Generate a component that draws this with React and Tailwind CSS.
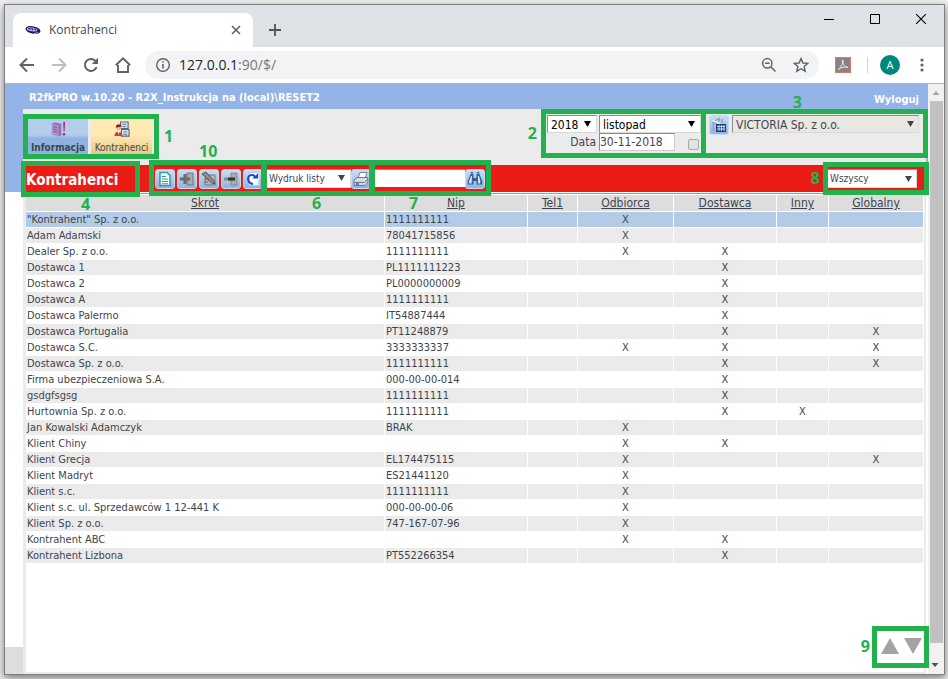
import React from "react";

const COLUMNS = ["Skrót", "Nip", "Tel1", "Odbiorca", "Dostawca", "Inny", "Globalny"];

// name, tax id, then the flags: o = Odbiorca, d = Dostawca, i = Inny, g = Globalny
const ROWS = [
  ['"Kontrahent" Sp. z o.o.', "1111111111", "o"],
  ["Adam Adamski", "78041715856", "o"],
  ["Dealer Sp. z o.o.", "1111111111", "od"],
  ["Dostawca 1", "PL1111111223", "d"],
  ["Dostawca 2", "PL0000000009", "d"],
  ["Dostawca A", "1111111111", "d"],
  ["Dostawca Palermo", "IT54887444", "d"],
  ["Dostawca Portugalia", "PT11248879", "dg"],
  ["Dostawca S.C.", "3333333337", "odg"],
  ["Dostawca Sp. z o.o.", "1111111111", "dg"],
  ["Firma ubezpieczeniowa S.A.", "000-00-00-014", "d"],
  ["gsdgfsgsg", "1111111111", "d"],
  ["Hurtownia Sp. z o.o.", "1111111111", "di"],
  ["Jan Kowalski Adamczyk", "BRAK", "o"],
  ["Klient Chiny", "", "od"],
  ["Klient Grecja", "EL174475115", "og"],
  ["Klient Madryt", "ES21441120", "o"],
  ["Klient s.c.", "1111111111", "o"],
  ["Klient s.c. ul. Sprzedawców 1 12-441 K", "000-00-00-06", "o"],
  ["Klient Sp. z o.o.", "747-167-07-96", "o"],
  ["Kontrahent ABC", "", "od"],
  ["Kontrahent Lizbona", "PT552266354", "d"],
];

function Dropdown({ label, value, className, arrow = "right-[5px]" }) {
  return (
    <span className={`relative flex shrink-0 ${className}`}>
      <select
        aria-label={label}
        defaultValue={value}
        className="h-full w-full appearance-none border border-[#d8d8d8] border-t-[#8c8c8c] border-l-[#8c8c8c] bg-inherit pt-px pl-[3px] leading-none outline-none"
      >
        <option>{value}</option>
      </select>
      <svg viewBox="0 0 7 6" className={`pointer-events-none absolute top-1/2 h-[6px] w-[7px] -translate-y-1/2 ${arrow}`}>
        <path d="M0 0H7L3.5 6Z" fill="currentColor" />
      </svg>
    </span>
  );
}

function ToolButton({ label, children }) {
  return (
    <button
      type="button"
      aria-label={label}
      className="flex h-5 w-5 shrink-0 items-center justify-center rounded-[3px] border border-[#c3dbf3] bg-linear-to-b from-[#c9def5] to-[#8fb4e0]"
    >
      {children}
    </button>
  );
}

function Browser() {
  return (
    <>
      <div className="flex h-[42px] bg-[#dee1e6] pl-2">
        <div className="mt-2 flex w-60 items-center rounded-t-lg bg-white pr-3 pl-3">
          <svg viewBox="0 0 16 10" className="h-[10px] w-4">
            <ellipse cx="8" cy="5" rx="7.6" ry="3.7" transform="rotate(12 8 5)" fill="#17176e" />
            <ellipse cx="7.2" cy="4.3" rx="5.4" ry="1.9" transform="rotate(10 7 4)" fill="#b9bbdc" />
            <path d="M3 3.4h2v1.6m1-1.3h1.6v1.7m1.2-1.3h1.6v1.4" stroke="#17176e" strokeWidth=".9" fill="none" />
            <path d="M9 8.6l4-.9" stroke="#fff" strokeWidth=".7" />
          </svg>
          <span className="ml-2 flex-1 text-xs text-[#45494d]">Kontrahenci</span>
          <button type="button" aria-label="Zamknij kartę">
            <svg viewBox="0 0 10 10" className="h-[10px] w-[10px]">
              <path d="M1 1L9 9M9 1L1 9" stroke="#5f6368" strokeWidth="1.6" />
            </svg>
          </button>
        </div>
        <button type="button" aria-label="Nowa karta" className="mt-2 ml-4">
          <svg viewBox="0 0 12 12" className="h-3 w-3">
            <path d="M6 0V12M0 6H12" stroke="#505459" strokeWidth="1.8" />
          </svg>
        </button>
        <div className="mt-[9px] ml-auto flex h-[10px] gap-9 pr-[18px]">
          <button type="button" aria-label="Minimalizuj">
            <svg viewBox="0 0 10 10" className="h-[10px] w-[10px]"><path d="M0 5.5H10" stroke="#000" /></svg>
          </button>
          <button type="button" aria-label="Maksymalizuj">
            <svg viewBox="0 0 10 10" className="h-[10px] w-[10px]"><path d="M.5 .5H9.5V9.5H.5Z" fill="none" stroke="#000" /></svg>
          </button>
          <button type="button" aria-label="Zamknij">
            <svg viewBox="0 0 10 10" className="h-[10px] w-[10px]"><path d="M0 0L10 10M10 0L0 10" stroke="#000" strokeWidth="1.1" /></svg>
          </button>
        </div>
      </div>
      <div className="flex h-[37px] items-center border-b border-[#b5b5b5] bg-white pl-[14px] pr-5 text-[#5f6368]">
        <div className="flex items-center gap-4">
          <button type="button" aria-label="Wstecz">
            <svg viewBox="0 0 16 16" className="h-4 w-4"><path d="M15 8H2M8 1.5L1.5 8L8 14.5" fill="none" stroke="currentColor" strokeWidth="1.9" /></svg>
          </button>
          <button type="button" aria-label="Dalej">
            <svg viewBox="0 0 16 16" className="h-4 w-4"><path d="M1 8H14M8 1.5L14.5 8L8 14.5" fill="none" stroke="#bcbec1" strokeWidth="1.9" /></svg>
          </button>
          <button type="button" aria-label="Odśwież">
            <svg viewBox="0 0 16 16" className="h-4 w-4">
              <path d="M13.6 10A6 6 0 1 1 12.4 3.9L14 5.6" fill="none" stroke="currentColor" strokeWidth="2" />
              <path d="M15 .8V7H8.8Z" fill="currentColor" />
            </svg>
          </button>
          <button type="button" aria-label="Strona główna">
            <svg viewBox="0 0 16 16" className="h-4 w-4"><path d="M3 8V15H6.5M13 8V15H3M.8 8.2L8 1.3L15.2 8.2" fill="none" stroke="currentColor" strokeWidth="1.9" /></svg>
          </button>
        </div>
        <div className="ml-[14px] flex h-7 flex-1 items-center rounded-full bg-[#f1f3f4] pr-[10px] pl-[10px]">
          <svg viewBox="0 0 16 16" className="h-4 w-4">
            <circle cx="8" cy="8" r="6.3" fill="none" stroke="currentColor" strokeWidth="1.4" />
            <path d="M8 7V11.6M8 4.2V5.8" stroke="currentColor" strokeWidth="1.6" />
          </svg>
          <span className="ml-2 flex-1 text-sm text-[#75787c]"><span className="text-[#25282b]">127.0.0.1</span>:90/$/</span>
          <svg viewBox="0 0 16 16" className="h-4 w-4">
            <circle cx="6.3" cy="6.3" r="4.7" fill="none" stroke="currentColor" strokeWidth="1.5" />
            <path d="M4 6.3H8.6M9.8 9.8L14.5 14.5" stroke="currentColor" strokeWidth="1.5" />
          </svg>
          <svg viewBox="0 0 16 16" className="ml-4 h-4 w-4">
            <path d="M8 1.6L9.9 6L14.7 6.4L11.1 9.5L12.2 14.2L8 11.7L3.8 14.2L4.9 9.5L1.3 6.4L6.1 6Z" fill="none" stroke="currentColor" strokeWidth="1.4" />
          </svg>
        </div>
        <svg viewBox="0 0 16 16" className="ml-4 h-4 w-4">
          <rect x=".5" y=".5" width="15" height="15" fill="#8b8280" stroke="#e0796d" />
          <path d="M7.2 3C9 2.6 8.2 7 3.4 13C2.6 12 9 9 13 10.3C11 11.4 7.2 7 7.2 3Z" fill="none" stroke="#eee" />
        </svg>
        <span className="ml-4 h-4 w-px bg-[#cfd1d4]" />
        <span className="ml-3 flex h-5 w-5 items-center justify-center rounded-full bg-[#00897b] text-[11px] text-white">A</span>
        <button type="button" aria-label="Menu" className="ml-5">
          <svg viewBox="0 0 4 14" className="h-[14px] w-1" fill="currentColor">
            <circle cx="2" cy="2" r="1.6" /><circle cx="2" cy="7" r="1.6" /><circle cx="2" cy="12" r="1.6" />
          </svg>
        </button>
      </div>
    </>
  );
}

function TopPanel() {
  return (
    <div className="flex h-14 items-start bg-[#ebebeb] pt-[6px] pr-[7px] pl-[5px] text-[#3f4650]">
      <div className="mt-1 flex gap-[3px] text-[10px] leading-3">
        <button type="button" className="flex h-[35px] w-[60px] flex-col items-center justify-between bg-linear-to-b from-[#b3cdeb] from-45% to-[#8fb3e0] to-55% pt-[2px] font-bold">
          <svg viewBox="0 0 18 18" className="h-[17px] w-[17px]">
            <path d="M2 3L5 1.5L12 3V15L9 16.5L2 14Z" fill="#9270b8" />
            <path d="M2 3L9 4.5V16.5L2 14Z" fill="#b28ccd" />
            <path d="M3.5 6L7.6 7M3.5 8.5L7.6 9.5M3.5 11L7.6 12" stroke="#79569f" />
            <path d="M14 1H16L15.4 11H14.4Z" fill="#ad2867" />
            <circle cx="14.8" cy="14" r="1.4" fill="#ad2867" />
          </svg>
          Informacja
        </button>
        <button type="button" className="flex h-[35px] w-[61px] flex-col items-center justify-between bg-linear-to-b from-[#ffeab4] from-45% to-[#e9c982] to-100% pt-[2px]">
          <svg viewBox="0 0 18 18" className="h-[17px] w-[17px]">
            <path d="M8 1H16V8H8ZM9 9H17V16H9Z" fill="#dfe8f2" stroke="#55677d" strokeWidth="1.2" />
            <path d="M10 3.5H14M10 6H14M11 11.5H15M11 14H15" stroke="#55677d" />
            <circle cx="6" cy="7" r="2.8" fill="#f3b58b" />
            <path d="M3 7C2 3 9 2 9 6Z" fill="#7a2b20" />
            <path d="M1.5 16C1.5 9.5 10 9.5 10 16Z" fill="#d13b4d" />
            <path d="M4.8 10.5L6 14L7.2 10.5Z" fill="#fff" />
          </svg>
          Kontrahenci
        </button>
      </div>
      <div className="ml-auto w-[154px] text-xs">
        <div className="flex gap-[2px] text-black">
          <Dropdown label="Rok" value="2018" className="h-[18px] w-[50px] bg-white" arrow="right-[6px]" />
          <Dropdown label="Miesiąc" value="listopad" className="h-[18px] w-[102px] bg-white" arrow="right-[6px]" />
        </div>
        <div className="flex items-center">
          <label htmlFor="data" className="w-[52px] pr-[3px] text-right">Data</label>
          <input id="data" defaultValue="30-11-2018" className="h-[18px] w-[76px] border border-[#ccc] border-t-[#8c8c8c] border-l-[#8c8c8c] bg-white" />
          <input type="checkbox" aria-label="Blokada daty" className="mt-1 ml-[13px] h-[11px] w-[11px] appearance-none rounded-[2px] border border-[#a8a8a8] bg-[#e3e3e3]" />
        </div>
      </div>
      <div className="ml-2 flex gap-[3px] text-xs">
        <ToolButton label="Firma">
          <svg viewBox="0 0 16 16" className="h-4 w-4">
            <path d="M1 6L8 1.5V6M2.5 14V6H6M11 2V6" fill="none" stroke="#8ba0bb" strokeWidth="1.4" />
            <path d="M1.5 3.5L9 6.5" stroke="#e8f1fb" strokeWidth="1.5" />
            <rect x="5" y="7" width="10" height="8" fill="#1d3f86" />
            <path d="M6 9.5H14M6 12H14M8 8V14M10.5 8V14M13 8V14" stroke="#d7e5f8" strokeWidth=".9" />
          </svg>
        </ToolButton>
        <Dropdown label="Firma" value="VICTORIA Sp. z o.o." className="h-[18px] w-[187px] bg-[#e8e8e1]" arrow="right-[5px]" />
      </div>
    </div>
  );
}

function RedBar() {
  return (
    <div className="flex h-[27px] items-center bg-[#eb1c16] pr-[7px] text-[10px] text-[#3f4650]">
      <h1 className="w-[129px] shrink-0 pt-[3px] text-[15px] leading-none font-bold text-white">Kontrahenci</h1>
      <div className="flex gap-[2px]">
        <ToolButton label="Nowy">
          <svg viewBox="0 0 16 16" className="h-4 w-4">
            <path d="M3 1.5H10L13 4.5V14.5H3Z" fill="#fff" stroke="#2a9aab" strokeWidth="1.5" />
            <path d="M5 5.5H9M5 8H11M5 10.5H11M5 12.7H11" stroke="#2a9aab" strokeWidth="1.1" />
          </svg>
        </ToolButton>
        <ToolButton label="Dodaj">
          <svg viewBox="0 0 16 16" className="h-4 w-4">
            <path d="M8 2H14V14H8Z" fill="#aaa" stroke="#777" />
            <path d="M6 3V13M1 8H11" stroke="#6b6b6b" strokeWidth="3" />
          </svg>
        </ToolButton>
        <ToolButton label="Edytuj">
          <svg viewBox="0 0 16 16" className="h-4 w-4">
            <path d="M6 4H14V14H4V9Z" fill="#b9b9b9" stroke="#777" />
            <path d="M1 3L5 1L13 10L14 13L10.5 12Z" fill="#8e8e8e" stroke="#555" />
            <path d="M3 8H8M3 11H7" stroke="#666" />
          </svg>
        </ToolButton>
        <ToolButton label="Usuń">
          <svg viewBox="0 0 16 16" className="h-4 w-4">
            <path d="M8 2H14V14H8Z" fill="#aaa" stroke="#888" />
            <path d="M1 8H6" stroke="#888" strokeWidth="3" />
            <path d="M5 8H12" stroke="#333" strokeWidth="3" />
          </svg>
        </ToolButton>
        <ToolButton label="Odśwież listę">
          <svg viewBox="0 0 16 16" className="h-4 w-4">
            <path d="M4 1.5H11L14 4.5V14.5H4Z" fill="#fff" stroke="#b6c5dc" />
            <path d="M8 13C2 12 1.5 4.5 6.5 4C8.5 3.8 10 5 10.5 7" fill="none" stroke="#1449d8" strokeWidth="2" />
            <path d="M7.3 7.6H13V2.5Z" fill="#1449d8" />
          </svg>
        </ToolButton>
      </div>
      <div className="ml-[2px] flex">
        <Dropdown label="Wydruk" value="Wydruk listy" className="h-[19px] w-[86px] bg-white" arrow="right-[6px]" />
        <ToolButton label="Drukuj">
          <svg viewBox="0 0 16 16" className="h-4 w-4">
            <path d="M5 7L7 1.5H14L12 7Z" fill="#fff" stroke="#76859a" />
            <path d="M1 9L4 6.5H14.5L15 11L12 14.5H1.5Z" fill="#d4dae3" stroke="#6b7889" />
            <path d="M2 11.5H11.5L14.5 8.5" fill="none" stroke="#6b7889" />
            <path d="M3 13H6" stroke="#3559c5" strokeWidth="1.5" />
          </svg>
        </ToolButton>
      </div>
      <div className="ml-[3px] flex">
        <input aria-label="Szukaj" className="h-[18px] w-[91px] border-t border-[#8c8c8c] bg-white" />
        <ToolButton label="Znajdź">
          <svg viewBox="0 0 16 16" className="h-4 w-4">
            <path d="M3.5 3H6.5V7H9.5V3H12.5L15.2 10V13.5H9.5V10H6.5V13.5H.8V10Z" fill="#3b5f9c" />
            <path d="M4 5L2.2 10V12.5H4.6L5 5ZM11 5L11 12.5H13L13.4 10.5L12 5Z" fill="#dce8f7" />
            <path d="M3.7 1.8H6.2M9.8 1.8H12.3" stroke="#3b5f9c" strokeWidth="1.6" />
          </svg>
        </ToolButton>
      </div>
      <Dropdown label="Rodzaj" value="Wszyscy" className="ml-auto h-[19px] w-[91px] bg-white" arrow="right-[5px]" />
    </div>
  );
}

function Contractors() {
  return (
    <table className="w-full table-fixed border-separate border-spacing-0 text-[11px] text-[#3d444c]">
      <colgroup>
        <col />
        <col className="w-[143px]" />
        <col className="w-[50px]" />
        <col className="w-[96px]" />
        <col className="w-[103px]" />
        <col className="w-[52px]" />
        <col className="w-[95px]" />
      </colgroup>
      <thead>
        <tr className="bg-[#ddd]">
          {COLUMNS.map((name) => (
            <th key={name} className="h-[17px] border-r border-b border-white p-0 pt-px text-xs leading-[15px] font-normal">
              <a href="#" className="underline">{name}</a>
            </th>
          ))}
        </tr>
      </thead>
      <tbody>
        {ROWS.map(([name, nip, flags], i) => (
          <tr key={name} className={i === 0 ? "bg-[#b4cbe7]" : i % 2 ? "bg-[#ebebeb]" : "bg-white"}>
            <td className="h-4 border-r border-b border-white p-0 pt-px pl-px leading-[14px] whitespace-nowrap">{name}</td>
            <td className="border-r border-b border-white p-0 pt-px pl-px leading-[14px]">{nip}</td>
            <td className="border-r border-b border-white p-0" />
            {["o", "d", "i", "g"].map((flag) => (
              <td key={flag} className="border-r border-b border-white p-0 pt-px text-center leading-[14px]">
                {flags.includes(flag) ? "X" : ""}
              </td>
            ))}
          </tr>
        ))}
      </tbody>
    </table>
  );
}

const FRAME = "pointer-events-none absolute border-[5px] border-[#22b14c]";
const NUMBER = "pointer-events-none absolute text-base leading-4 font-bold text-[#22b14c]";

// Numbered call-outs laid over the page, measured from the corners of the window.
function Callouts() {
  return (
    <div className="pointer-events-none absolute inset-0 font-['Open_Sans',sans-serif]">
      <div className={`${FRAME} top-[109px] left-[18px] h-[45px] w-[136px]`} />
      <span className={`${NUMBER} top-[123px] left-[159px]`}>1</span>
      <div className={`${FRAME} top-[104px] right-[238px] h-[49px] w-[165px]`} />
      <span className={`${NUMBER} top-[120px] right-[407px]`}>2</span>
      <div className={`${FRAME} top-[104px] right-[16px] h-[49px] w-[227px]`} />
      <span className={`${NUMBER} top-[89px] right-[142px]`}>3</span>
      <div className={`${FRAME} top-[156px] left-[16px] h-[36px] w-[119px]`} />
      <span className={`${NUMBER} top-[191px] left-[76px]`}>4</span>
      <div className={`${FRAME} top-[155px] left-[144px] h-[36px] w-[117px]`} />
      <span className={`${NUMBER} top-[138px] left-[194px]`}>10</span>
      <div className={`${FRAME} top-[155px] left-[257px] h-[36px] w-[112px]`} />
      <span className={`${NUMBER} top-[190px] left-[307px]`}>6</span>
      <div className={`${FRAME} top-[155px] left-[365px] h-[36px] w-[121px]`} />
      <span className={`${NUMBER} top-[190px] left-[404px]`}>7</span>
      <div className={`${FRAME} top-[157px] right-[15px] h-[33px] w-[106px]`} />
      <span className={`${NUMBER} top-[165px] right-[124px]`}>8</span>
      <div className={`${FRAME} right-[15px] bottom-[6px] h-[42px] w-[57px]`} />
      <span className={`${NUMBER} right-[74px] bottom-[20px]`}>9</span>
    </div>
  );
}

export default function App() {
  return (
    <div className="flex min-h-screen bg-[#efefef] py-1 pr-[3px] pl-1">
      <div className="relative flex flex-1 flex-col border border-[#808080] bg-white font-['Open_Sans',sans-serif] shadow-[0_3px_8px_rgba(0,0,0,0.5)]">
        <Browser />
        <div className="flex flex-1 font-['DejaVu_Sans_Condensed','DejaVu_Sans',sans-serif]">
          <main className="flex flex-1 flex-col">
            <header className="flex h-[25px] items-center justify-between bg-[#94b3e6] pt-[3px] pr-[9px] pl-6 text-[11px] font-bold text-white">
              <span>R2fkPRO w.10.20 - R2X_Instrukcja na (local)\RESET2</span>
              <a href="#" className="pt-1">Wyloguj</a>
            </header>
            <div className="flex flex-1">
              <div className="flex w-[18px] flex-col">
                <div className="h-[83px] bg-[#94b3e6]" />
                <div className="mt-auto h-[27px] bg-[#ddd]" />
              </div>
              <div className="flex flex-1 flex-col">
                <TopPanel />
                <div className="flex flex-1 flex-col border-r-2 border-b-2 border-l-[3px] border-[#ebebeb]">
                  <RedBar />
                  <div className="mt-px mb-px h-px bg-[#999]" />
                  <Contractors />
                  <div className="mt-auto flex justify-end gap-[5px] pr-[2px] pb-[18px]">
                    <button type="button" aria-label="Poprzednia strona">
                      <svg viewBox="0 0 18 16" className="h-4 w-[18px]"><path d="M9 0L18 16H0Z" fill="#a3a3a3" /></svg>
                    </button>
                    <button type="button" aria-label="Następna strona">
                      <svg viewBox="0 0 18 16" className="h-4 w-[18px]"><path d="M0 0H18L9 16Z" fill="#a3a3a3" /></svg>
                    </button>
                  </div>
                </div>
              </div>
              <div className="w-[2px]"><div className="h-[83px] bg-[#94b3e6]" /></div>
            </div>
          </main>
          <div className="flex w-4 flex-col items-center bg-[#f1f1f1]">
            <svg viewBox="0 0 16 17" className="h-[17px] w-4"><path d="M4.5 11H11.5L8 7Z" fill="#a3a3a3" /></svg>
            <div className="w-[13px] flex-1 bg-[#c1c1c1]" />
            <svg viewBox="0 0 16 31" className="h-[31px] w-4"><path d="M3.5 20H10.5L7 24Z" fill="#505050" /></svg>
          </div>
        </div>
        <Callouts />
      </div>
    </div>
  );
}
